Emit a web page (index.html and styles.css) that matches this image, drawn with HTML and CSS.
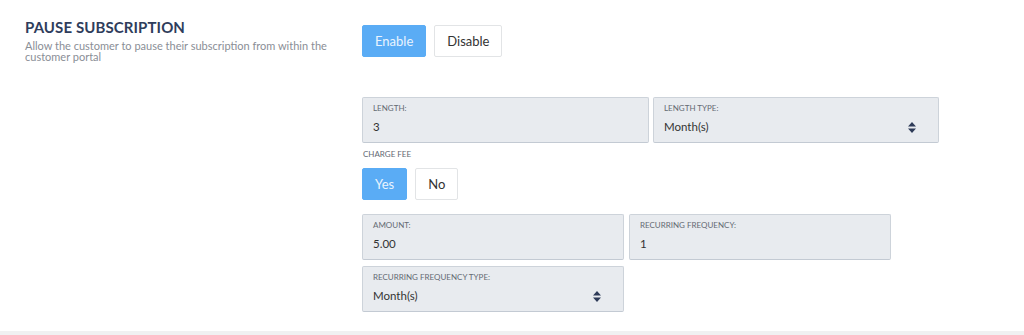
FILE: index.html
```html
<!DOCTYPE html>
<html>
<head>
    <meta charset="UTF-8">
    <title>Pause Subscription</title>
    <link rel="stylesheet" href="styles.css">
</head>
<body>
    <div class="setting">
        <div class="setting-info">
            <h2>Pause Subscription</h2>
            <p>Allow the customer to pause their subscription from within the customer portal</p>
        </div>

        <div class="setting-body">
            <div class="toggle">
                <button class="btn active">Enable</button>
                <button class="btn">Disable</button>
            </div>

            <div class="fields wide">
                <div class="field">
                    <label>Length:</label>
                    <div class="value">3</div>
                </div>
                <div class="field">
                    <label>Length Type:</label>
                    <div class="value select">Month(s)
                        <svg width="8" height="11" viewBox="0 0 8 11"><path d="M4 0L8 4.5H0Z M4 11L8 6.5H0Z" fill="#2e3b58"/></svg>
                    </div>
                </div>
            </div>

            <div class="sub-label">Charge Fee</div>
            <div class="toggle small">
                <button class="btn active">Yes</button>
                <button class="btn">No</button>
            </div>

            <div class="fields narrow">
                <div class="field">
                    <label>Amount:</label>
                    <div class="value">5.00</div>
                </div>
                <div class="field">
                    <label>Recurring Frequency:</label>
                    <div class="value">1</div>
                </div>
                <div class="field">
                    <label>Recurring Frequency Type:</label>
                    <div class="value select">Month(s)
                        <svg width="8" height="11" viewBox="0 0 8 11"><path d="M4 0L8 4.5H0Z M4 11L8 6.5H0Z" fill="#2e3b58"/></svg>
                    </div>
                </div>
            </div>
        </div>
    </div>
    <div class="footer-line"></div>
</body>
</html>
```

FILE: styles.css
```css
body {
    margin: 0;
    background: #fff;
    font-family: "Lato", "Open Sans", sans-serif;
    color: #333;
}
.setting {
    display: flex;
    padding: 25px 0 19px 25px;
}
.setting-info {
    width: 337px;
    flex-shrink: 0;
}
h2 {
    margin: -9px 0 0 0;
    font-size: 15px;
    font-weight: 700;
    text-transform: uppercase;
    color: #2f3d5c;
    line-height: 22px;
    letter-spacing: 0.1px;
}
.setting-info p {
    margin: 2px 0 0 0;
    width: 310px;
    font-size: 11px;
    line-height: 11px;
    color: #8a8e96;
}
.setting-body {
    display: flex;
    flex-direction: column;
}
.toggle {
    display: flex;
    gap: 8px;
}
.btn {
    height: 32px;
    padding: 0 12px;
    border: 1px solid #e2e4e6;
    border-radius: 2px;
    background: #fff;
    color: #333;
    font-family: inherit;
    font-size: 13px;
}
.btn.active {
    background: #5aacf5;
    border-color: #5aacf5;
    color: #eaf4fe;
}
.toggle.small .btn {
    padding: 0 12px;
}
.fields {
    display: grid;
    gap: 6px 4px;
}
.fields.wide {
    margin-top: 40px;
    width: 577px;
    grid-template-columns: 287px 286px;
}
.fields.narrow {
    margin-top: 14px;
    width: 529px;
    grid-template-columns: 262px 262px;
    column-gap: 5px;
}
.field {
    height: 46px;
    box-sizing: border-box;
    padding: 6px 10px 0 10px;
    background: #e8ebef;
    border: 1px solid #cdd3da;
    border-bottom-color: #c3cad3;
    border-radius: 2px;
}
.field label {
    display: block;
    font-size: 8px;
    line-height: 8px;
    text-transform: uppercase;
    color: #646a73;
}
.value {
    margin-top: 7px;
    font-size: 11.5px;
    line-height: 16px;
    color: #333;
}
.select {
    display: flex;
    justify-content: space-between;
    align-items: center;
    padding-right: 12px;
}
.sub-label {
    margin: 7px 0 10px 1px;
    font-size: 8px;
    line-height: 8px;
    text-transform: uppercase;
    color: #646a73;
}
.footer-line {
    height: 4px;
    background: #f0f1f2;
}
```
